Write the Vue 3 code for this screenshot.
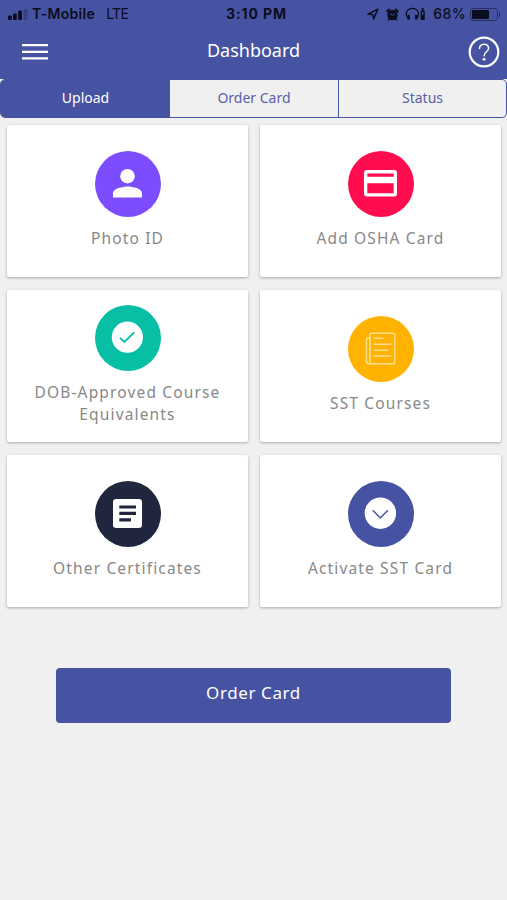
<script setup>
const tabs = ['Upload', 'Order Card', 'Status']
const cards = [
  { label: 'Photo ID', icon: 'person', tone: 'violet' },
  { label: 'Add OSHA Card', icon: 'card', tone: 'red' },
  { label: 'DOB-Approved Course Equivalents', icon: 'check', tone: 'teal' },
  { label: 'SST Courses', icon: 'book', tone: 'amber' },
  { label: 'Other Certificates', icon: 'article', tone: 'navy' },
  { label: 'Activate SST Card', icon: 'chevron', tone: 'indigo' },
]
</script>

<template>
  <div class="screen">
    <header class="top">
      <div class="status">
        <div class="carrier">
          <svg class="signal" width="20" height="11" viewBox="0 0 20 11">
            <rect x="0" y="6.5" width="3.8" height="4.5" rx="1" />
            <rect x="5" y="4.5" width="3.8" height="6.5" rx="1" />
            <rect x="10.2" y="1.5" width="3.8" height="9.5" rx="1" />
            <rect x="15.6" y="0" width="3.8" height="11" rx="1" opacity=".25" />
          </svg>
          <span class="name">T-Mobile</span>
          <span class="net">LTE</span>
        </div>
        <div class="time">3:10 PM</div>
        <div class="indicators">
          <svg class="arrow" width="12" height="12" viewBox="0 0 12 12">
            <path d="M1 6.2 10.8 1.2 6.6 11 5.9 6.6Z" fill="none" stroke="#0b0d20" stroke-width="1.5" stroke-linejoin="round" />
          </svg>
          <svg class="alarm" width="13" height="13" viewBox="0 0 13 13">
            <circle cx="6.5" cy="7" r="5.2" />
            <path d="M1.2 3.4 3.2 1.5M11.8 3.4 9.8 1.5" stroke="#0b0d20" stroke-width="2" stroke-linecap="round" />
            <path d="M3.2 10.8 2.4 11.8M9.8 10.8 10.6 11.8" stroke="#0b0d20" stroke-width="1.5" stroke-linecap="round" />
            <path d="M4.2 5.4 6.5 7.3 8.8 5.8" fill="none" stroke="#4653a2" stroke-width="1" />
          </svg>
          <svg class="phones" width="21" height="14" viewBox="0 0 21 14">
            <path d="M3 11.5C-.8 6.5 2.4 1.4 7.4 1.4S15.6 6.5 11.8 11.5" fill="none" stroke="#0b0d20" stroke-width="1.3" />
            <rect x="2.6" y="7.8" width="2.3" height="5" rx="1" />
            <rect x="9.9" y="7.8" width="2.3" height="5" rx="1" />
            <rect x="15.6" y="3.5" width="4.2" height="9.5" rx="1.2" />
            <rect x="16.7" y="1" width="2" height="2.5" rx=".6" />
            <rect x="17.1" y="5" width="1.2" height="3" fill="#4653a2" />
          </svg>
          <span class="percent">68%</span>
          <svg class="battery" width="31" height="13" viewBox="0 0 31 13">
            <rect x=".5" y=".5" width="27" height="12" rx="3" fill="none" stroke="#0b0d20" stroke-opacity=".5" />
            <rect x="2" y="2" width="17" height="9" rx="1" />
            <path d="M29 4.2C30.8 5 30.8 8 29 8.8Z" opacity=".5" />
          </svg>
        </div>
      </div>
      <div class="bar">
        <button class="menu" aria-label="Menu">
          <svg width="26" height="18" viewBox="0 0 26 18"><path d="M0 2.2H26M0 8.9H26M0 15.4H26" stroke="#fff" stroke-width="2.3" /></svg>
        </button>
        <h1>Dashboard</h1>
        <button class="help" aria-label="Help">
          <svg width="32" height="32" viewBox="0 0 32 32" fill="none" stroke="#fff">
            <circle cx="16" cy="16" r="14.3" stroke-width="2.2" />
            <path d="M11.5 12.6C11.5 6.8 20.6 6.6 20.6 12.3C20.6 15.8 16.1 15.7 16.1 19.7" stroke-width="1.5" stroke-linecap="round" />
            <circle cx="16.1" cy="23.3" r="1.4" fill="#fff" stroke="none" />
          </svg>
        </button>
      </div>
    </header>

    <nav class="tabs">
      <button v-for="(tab, i) in tabs" :key="tab" class="tab" :class="{ active: i === 0 }">{{ tab }}</button>
    </nav>

    <main class="grid">
      <section v-for="card in cards" :key="card.label" class="card">
        <div class="disc" :class="card.tone">
          <svg width="66" height="66" viewBox="0 0 66 66">
            <g v-if="card.icon === 'person'" fill="#fff">
              <circle cx="32.5" cy="25.2" r="7.3" />
              <path d="M18 46.5V42.1C18 37.5 27.5 35.5 32.5 35.5S47 37.5 47 42.1V46.5Z" />
            </g>
            <path v-else-if="card.icon === 'card'" fill="#fff" fill-rule="evenodd"
              d="M19 19H46Q49 19 49 22V42.4Q49 45.400 46 45.400H19Q16 45.400 16 42.400V22Q16 19 19 19ZM19.300 22.600V25.700H45.700V22.600ZM19.300 32.300V42.200H45.700V32.300Z" />
            <g v-else-if="card.icon === 'check'">
              <circle cx="32.4" cy="32.2" r="15.6" fill="#fff" />
              <path d="M25 32.900 29.400 37 39.200 27.400" fill="none" stroke="#06bfa4" stroke-width="1.9" />
            </g>
            <g v-else-if="card.icon === 'book'" fill="none" stroke="#ffe08a" stroke-width="1.4">
              <rect x="22" y="17.200" width="24.800" height="30.500" rx="2" />
              <path d="M22 21.700H20.500Q18.500 21.700 18.500 23.700V45.200Q18.500 47.700 21.100 47.700H26M22 22V44.200" />
              <path d="M25.800 22.200H35.300M25.800 28.200H43.300M25.800 34.200H40.300M25.800 40H43.300" />
            </g>
            <g v-else-if="card.icon === 'article'">
              <rect x="18" y="18" width="29" height="29" rx="3.2" fill="#fff" />
              <path d="M24.300 26H41M24.300 32.400H41M24.300 38.900H36" stroke="#20263e" stroke-width="3.200" />
            </g>
            <g v-else>
              <circle cx="32.400" cy="32.200" r="15.700" fill="#fff" />
              <path d="M24.800 29.200 32.300 36.900 39.800 29.200" fill="none" stroke="#4653a2" stroke-width="1.500" />
            </g>
          </svg>
        </div>
        <p>{{ card.label }}</p>
      </section>
    </main>

    <button class="order">Order Card</button>
  </div>
</template>

<style>
body { background: #f0f0f0; }
</style>

<style scoped>
.screen { height: 900px; background: #f0f0f0; font-family: "Noto Sans", sans-serif; box-sizing: border-box; overflow: hidden; }
button { border: 0; padding: 0; background: none; font: inherit; color: inherit; }
.top { height: 79px; background: #4653a2; color: #fff; }
.status { height: 28px; display: grid; grid-template-columns: 1fr auto 1fr; align-items: center; padding: 0 6px 0 8px; color: #0b0d20; fill: #0b0d20; font: 600 14px/28px Inter, sans-serif; }
.carrier, .indicators { display: flex; align-items: center; }
.name { margin-left: 4px; letter-spacing: .3px; }
.net { margin-left: 11px; font-weight: 400; letter-spacing: -.6px; }
.time { margin-left: 4px; font-weight: 700; letter-spacing: .9px; }
.indicators { justify-content: flex-end; }
.alarm { margin-left: 7px; }
.phones { margin-left: 6px; }
.percent { margin-left: 7px; font-weight: 500; letter-spacing: .4px; }
.battery { margin-left: 4px; }
.bar { height: 51px; display: grid; grid-template-columns: 1fr auto 1fr; align-items: start; padding: 0 7px 0 22px; }
.menu { width: 26px; padding-top: 15px; }
.menu svg { display: block; }
h1 { margin: 8px 0 0 -15px; font-size: 18px; line-height: 28px; font-weight: 400; }
.help { justify-self: end; width: 32px; height: 32px; margin-top: 8px; }
.help svg { display: block; }
.tabs { display: grid; grid-template-columns: 169px 168px 1fr; height: 39px; box-sizing: border-box; border: 1px solid #4653a2; border-radius: 5px; overflow: hidden; }
.tab { font-size: 14px; line-height: 35px; padding-bottom: 2px; color: #5b60a8; border-left: 1px solid #4653a2; }
.tab.active { background: #4653a2; color: #fff; border: 0; }
.tab:nth-child(2) { border-left: 0; }
.grid { display: grid; grid-template-columns: 1fr 1fr; grid-auto-rows: 152px; gap: 13px 12px; padding: 7px 6px 0 7px; }
.card { background: #fff; border-radius: 2px; box-shadow: 0 1px 3px rgba(0, 0, 0, .3); display: flex; flex-direction: column; align-items: center; justify-content: center; }
.disc { width: 66px; height: 66px; border-radius: 50%; }
.disc svg { display: block; }
.violet { background: #7c4dff; }
.red { background: #ff0d4f; }
.teal { background: #06bfa4; }
.amber { background: #ffb300; }
.navy { background: #20263e; }
.indigo { background: #4653a2; }
.card p { margin: 10px 0 3px; width: 205px; text-align: center; font-size: 15.5px; line-height: 22px; letter-spacing: 1.15px; color: #888; }
.order { display: block; width: 395px; height: 55px; margin: 61px auto 0; padding-bottom: 6px; border-radius: 4px; background: #4653a2; color: #fff; font-size: 17px; letter-spacing: .6px; }
</style>
